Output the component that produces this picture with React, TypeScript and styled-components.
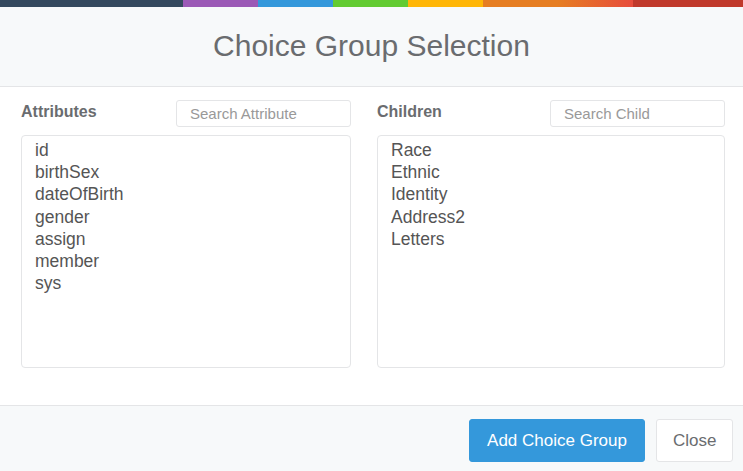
import React from "react";
import styled, { createGlobalStyle } from "styled-components";

const Global = createGlobalStyle`
  html, body { margin: 0; padding: 0; background: #ffffff; }
  body { font-family: "Liberation Sans", Arial, sans-serif; color: #6a6c6f; }
  * { box-sizing: border-box; }
`;

const Modal = styled.div`
  width: 743px;
  height: 471px;
  display: flex;
  flex-direction: column;
  background: #ffffff;
  overflow: hidden;
`;

const ColorLine = styled.div`
  height: 7px;
  flex: none;
  background: linear-gradient(
    to right,
    #34495e 0px, #34495e 183px,
    #9b59b6 183px, #9b59b6 258px,
    #3498db 258px, #3498db 333px,
    #62cb31 333px, #62cb31 408px,
    #ffb606 408px, #ffb606 483px,
    #e67e22 483px, #e67e22 558px,
    #e74c3c 633px,
    #c0392b 633px, #c0392b 743px
  );
`;

const Header = styled.div`
  height: 80px;
  flex: none;
  display: flex;
  align-items: center;
  justify-content: center;
  background: #f7f9fa;
  border-bottom: 1px solid #e4e5e7;
`;

const Title = styled.h4`
  margin: 0 0 1px 0;
  font-size: 30px;
  font-weight: 400;
  color: #6a6c6f;
`;

const Body = styled.div`
  flex: 1;
  display: grid;
  grid-template-columns: 330px 348px;
  column-gap: 26px;
  padding: 13px 18px 0 21px;
`;

const Column = styled.div`
  display: flex;
  flex-direction: column;
`;

const ColumnHead = styled.div`
  display: flex;
  align-items: center;
  justify-content: space-between;
  height: 27px;
  margin-bottom: 8px;
`;

const Label = styled.label`
  font-size: 16px;
  font-weight: 700;
  color: #6a6c6f;
  margin-top: -4px;
`;

const Search = styled.input`
  width: 175px;
  height: 27px;
  border: 1px solid #e4e5e7;
  border-radius: 3px;
  padding: 0 13px;
  font-family: "Liberation Sans", Arial, sans-serif;
  font-size: 15px;
  color: #555;
  background: #fff;
  outline: none;
  &::placeholder { color: #999; }
`;

const ListBox = styled.div`
  height: 233px;
  border: 1px solid #e4e5e7;
  border-radius: 4px;
  padding: 3px 13px;
  overflow: hidden;
`;

const Item = styled.div`
  font-size: 17.5px;
  line-height: 22.2px;
  color: #555555;
  white-space: nowrap;
`;

const Footer = styled.div`
  height: 66px;
  flex: none;
  display: flex;
  justify-content: flex-end;
  align-items: flex-start;
  gap: 11px;
  padding: 13px 10px 0 0;
  background: #f7f9fa;
  border-top: 1px solid #e4e5e7;
`;

const Button = styled.button<{ $primary?: boolean }>`
  height: 43px;
  padding: 0 16px;
  border-radius: 3px;
  font-family: "Liberation Sans", Arial, sans-serif;
  font-size: 17px;
  cursor: pointer;
  border: 1px solid ${(p) => (p.$primary ? "#3498db" : "#e4e5e7")};
  background: ${(p) => (p.$primary ? "#3498db" : "#ffffff")};
  color: ${(p) => (p.$primary ? "#ffffff" : "#6a6c6f")};
`;

const attributes = ["id", "birthSex", "dateOfBirth", "gender", "assign", "member", "sys"];
const children = ["Race", "Ethnic", "Identity", "Address2", "Letters"];

export default function App() {
  return (
    <>
      <Global />
      <Modal>
        <ColorLine />
        <Header>
          <Title>Choice Group Selection</Title>
        </Header>
        <Body>
          <Column>
            <ColumnHead>
              <Label>Attributes</Label>
              <Search placeholder="Search Attribute" />
            </ColumnHead>
            <ListBox>
              {attributes.map((a) => (
                <Item key={a}>{a}</Item>
              ))}
            </ListBox>
          </Column>
          <Column>
            <ColumnHead>
              <Label>Children</Label>
              <Search placeholder="Search Child" />
            </ColumnHead>
            <ListBox>
              {children.map((c) => (
                <Item key={c}>{c}</Item>
              ))}
            </ListBox>
          </Column>
        </Body>
        <Footer>
          <Button $primary style={{ width: 176 }}>Add Choice Group</Button>
          <Button style={{ width: 77 }}>Close</Button>
        </Footer>
      </Modal>
    </>
  );
}
